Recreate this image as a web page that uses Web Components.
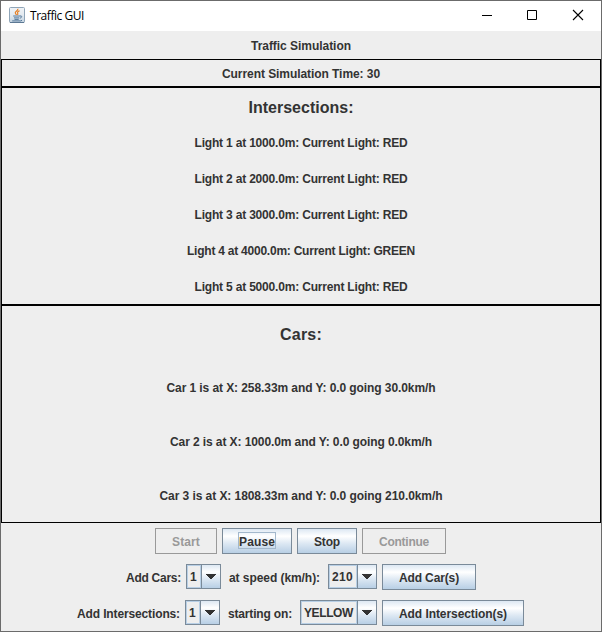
<!DOCTYPE html>
<html lang="en">
<head>
<meta charset="utf-8">
<title>Traffic GUI</title>
<style>
html, body { margin: 0; height: 100%; overflow: hidden; }
</style>
</head>
<body>
<traffic-window></traffic-window>
<script>
const attach = (el, html) => { el.attachShadow({ mode: 'open' }).innerHTML = html; };

/* Text run spread evenly over the advance width given by its "w" attribute. */
class FitText extends HTMLElement {
  connectedCallback() {
    attach(this, `<style>
      :host { display: block; white-space: pre; line-height: 16px; height: 16px; }
      span { display: inline-block; }
    </style><span></span>`);
    const text = this.getAttribute('text');
    const span = this.shadowRoot.querySelector('span');
    span.textContent = text;
    const w = parseFloat(this.getAttribute('w'));
    this.style.width = w + 'px';
    span.style.letterSpacing = (w - span.getBoundingClientRect().width) / text.length + 'px';
  }
}

class TitleBar extends HTMLElement {
  connectedCallback() {
    attach(this, `<style>
      :host { display: flex; align-items: center; height: 30px; box-sizing: border-box; background: #fff; color: #000;
        font: 400 12px "Open Sans", "Noto Sans", sans-serif; padding: 0 0 0 8px; }
      .icon { display: block; margin: 0 5px 2px 0; }
      fit-text { flex: 1; }
      .controls { display: flex; margin-left: auto; }
      .controls svg { display: block; width: 46px; height: 30px; }
    </style>
    <svg class="icon" width="16" height="16" viewBox="0 0 16 16">
      <defs><linearGradient id="g" x2="0" y2="1"><stop offset="0" stop-color="#f0f3f6"/><stop offset=".5" stop-color="#e3eaf0"/><stop offset="1" stop-color="#c3d2df"/></linearGradient></defs>
      <rect x=".5" y=".5" width="15" height="15" rx="1" fill="url(#g)" stroke="#8fa5b8"/>
      <path d="M1 15.500h14" stroke="#5c7893" fill="none"/>
      <path d="M8.800 1.800c.6 1.800-2.600 2.300-2.500 4 .1 1 1.100 1.400 1.200 2.200M10.600 3.800C8.800 4.500 8.200 5.300 8.700 6.200c.4.700.2 1.100-.3 1.700" stroke="#e67e22" stroke-width="1.200" fill="none"/>
      <path d="M4.200 9h7M11 9c2.200-.5 2.500 1.500-.2 2.200M5 10.900h5.200M5.500 12.400h4.200M3.200 13.900h8.500l1.300-.6" stroke="#55799b" stroke-width="1" fill="none"/>
    </svg>
    <fit-text text="Traffic GUI" w="54"></fit-text>
    <div class="controls">
      <svg viewBox="0 0 46 30"><path d="M19 14.5h10" stroke="#000"/></svg>
      <svg viewBox="0 0 46 30"><path d="M18.500 9.500h9v9h-9z" fill="none" stroke="#000"/></svg>
      <svg viewBox="0 0 46 30"><path d="M18 9l10 10M28 9l-10 10" stroke="#000" stroke-width="1.1"/></svg>
    </div>`);
  }
}

/* Black-outlined panel whose rows share its height equally. */
class LinedPanel extends HTMLElement {
  connectedCallback() {
    attach(this, `<style>
      :host { display: grid; grid-auto-rows: 1fr; box-sizing: border-box; border: 1px solid #000; justify-items: center; align-items: center; }
      ::slotted(fit-text) { padding-top: 2px; }
      ::slotted(.big) { padding-top: 4px; }
    </style><slot></slot>`);
  }
}

class MetalButton extends HTMLElement {
  connectedCallback() {
    attach(this, `<style>
      :host { display: flex; box-sizing: border-box; width: ${this.getAttribute('width')}px; height: 26px; align-items: flex-start; justify-content: center;
        padding-top: 4px; border: 1px solid #7a8a99; background: linear-gradient(#dde8f3, #fff 30%, #dde8f3 60%, #b8cfe5); }
      :host([disabled]) { color: #999; border-color: #999; background: none; }
      fit-text { height: 15px; line-height: 18px; }
      .focus { outline: 1px solid #a3b8cc; }
    </style><fit-text class="${this.hasAttribute('focused') ? 'focus' : ''}" text="${this.getAttribute('label')}" w="${this.getAttribute('w')}"></fit-text>`);
  }
}

class MetalCombo extends HTMLElement {
  connectedCallback() {
    attach(this, `<style>
      :host { display: flex; box-sizing: border-box; width: ${this.getAttribute('width')}px; height: 25px; border: 1px solid #7a8a99; }
      .value { flex: 1; box-sizing: border-box; border: 1px solid #b8cfe5; padding: 3px 0 0 2px; }
      .arrow { width: 18px; border-left: 1px solid #7a8a99; background: linear-gradient(#dde8f3, #fff 30%, #dde8f3 60%, #b8cfe5); }
      svg { display: block; }
    </style>
    <div class="value"><fit-text text="${this.getAttribute('value')}" w="${this.getAttribute('w')}"></fit-text></div>
    <div class="arrow"><svg width="18" height="23"><path d="M4 9h10v1h-1v1h-1v1h-1v1h-1v1h-2v-1h-1v-1h-1v-1h-1v-1h-1z" fill="#333" shape-rendering="crispEdges"/></svg></div>`);
  }
}

class ControlRow extends HTMLElement {
  connectedCallback() {
    attach(this, `<style>:host { display: flex; justify-content: center; gap: 5px; height: 26px; align-items: flex-start; }
      ::slotted(fit-text) { margin-top: 6px; }</style><slot></slot>`);
  }
}

class TrafficWindow extends HTMLElement {
  connectedCallback() {
    attach(this, `<style>
      :host { display: grid; grid-template-rows: 30px 28px 28px 218px 218px 1fr; box-sizing: border-box; width: 602px; height: 632px;
        border: 1px solid #6b6b6b; background: #eee; color: #333; font: 700 12px "Liberation Sans", Arial, sans-serif; }
      .heading { display: grid; place-items: center; padding-top: 2px; }
      .big { font-size: 16px; }
      .controls { display: grid; align-content: start; gap: 10px; padding-top: 5px; }
      .even { padding-right: 1px; }
      .space { padding-left: 3px; padding-right: 3px; }
    </style>
    <title-bar></title-bar>
    <div class="heading"><fit-text text="Traffic Simulation" w="100"></fit-text></div>
    <lined-panel><fit-text text="Current Simulation Time: 30" w="158"></fit-text></lined-panel>
    <lined-panel>
      <fit-text class="big" text="Intersections:" w="105"></fit-text>
      <fit-text text="Light 1 at 1000.0m: Current Light: RED" w="213"></fit-text>
      <fit-text text="Light 2 at 2000.0m: Current Light: RED" w="213"></fit-text>
      <fit-text text="Light 3 at 3000.0m: Current Light: RED" w="213"></fit-text>
      <fit-text text="Light 4 at 4000.0m: Current Light: GREEN" w="228"></fit-text>
      <fit-text text="Light 5 at 5000.0m: Current Light: RED" w="213"></fit-text>
    </lined-panel>
    <lined-panel>
      <fit-text class="big" text="Cars:" w="42"></fit-text>
      <fit-text text="Car 1 is at X: 258.33m and Y: 0.0 going 30.0km/h" w="269"></fit-text>
      <fit-text text="Car 2 is at X: 1000.0m and Y: 0.0 going 0.0km/h" w="262"></fit-text>
      <fit-text text="Car 3 is at X: 1808.33m and Y: 0.0 going 210.0km/h" w="283"></fit-text>
    </lined-panel>
    <div class="controls">
      <control-row class="even">
        <metal-button width="62" w="28" label="Start" disabled></metal-button>
        <metal-button width="70" w="36" label="Pause" focused></metal-button>
        <metal-button width="60" w="26" label="Stop"></metal-button>
        <metal-button width="84" w="50" label="Continue" disabled></metal-button>
      </control-row>
      <control-row>
        <fit-text text="Add Cars:" w="55"></fit-text>
        <metal-combo width="35" value="1" w="7"></metal-combo>
        <fit-text class="space" text="at speed (km/h):" w="91"></fit-text>
        <metal-combo width="49" value="210" w="21"></metal-combo>
        <metal-button width="94" w="60" label="Add Car(s)"></metal-button>
      </control-row>
      <control-row class="even">
        <fit-text text="Add Intersections:" w="103"></fit-text>
        <metal-combo width="35" value="1" w="7"></metal-combo>
        <fit-text class="space" text="starting on:" w="64"></fit-text>
        <metal-combo width="77" value="YELLOW" w="49"></metal-combo>
        <metal-button width="142" w="108" label="Add Intersection(s)"></metal-button>
      </control-row>
    </div>`);
  }
}

customElements.define('fit-text', FitText);
customElements.define('title-bar', TitleBar);
customElements.define('lined-panel', LinedPanel);
customElements.define('metal-button', MetalButton);
customElements.define('metal-combo', MetalCombo);
customElements.define('control-row', ControlRow);
customElements.define('traffic-window', TrafficWindow);
</script>
</body>
</html>
